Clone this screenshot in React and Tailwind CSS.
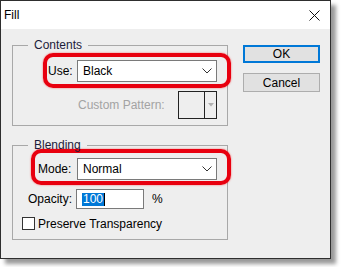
import React from 'react';

const font = { fontFamily: '"Liberation Sans", Arial, sans-serif' };

const Chevron = () => (
  <svg width="10" height="6" viewBox="0 0 10 6" className="shrink-0">
    <path d="M0.5 0.5 L5 5 L9.5 0.5" fill="none" stroke="#333" strokeWidth="1" />
  </svg>
);

const Select = ({ value }) => (
  <div className="w-[140px] h-[22px] bg-white border border-[#7a7a7a] flex items-center justify-between pl-[5px] pr-[4px] text-[12px] text-black">
    <span>{value}</span>
    <Chevron />
  </div>
);

const Group = ({ title, children, className = '' }) => (
  <fieldset className={`border border-[#a8a8a8] m-0 p-0 min-w-0 w-[216px] ${className}`}>
    <legend className="ml-[15px] px-[6px] text-[12px] leading-[16px] text-[#1c1c3a]">{title}</legend>
    {children}
  </fieldset>
);

export default function App() {
  return (
    <div className="w-[341px] h-[267px] bg-white" style={font}>
      <div className="w-[331px] h-[259px] border border-[#2e2e2e] bg-[#eeeeee] shadow-[5px_5px_4px_rgba(0,0,0,0.4)] flex flex-col">
        {/* Title bar */}
        <div className="h-[28px] bg-white flex items-center justify-between pl-[3px] pr-[10px] shrink-0">
          <span className="text-[12px] text-black">Fill</span>
          <svg width="11" height="11" viewBox="0 0 11 11">
            <path d="M0.5 0.5 L10.5 10.5 M10.5 0.5 L0.5 10.5" stroke="#111" strokeWidth="1" />
          </svg>
        </div>

        <div className="flex pl-[11px]">
          {/* Left column */}
          <div className="flex flex-col pt-[8px]">
            <Group title="Contents" className="pb-[6px]">
              <div className="ml-[30px] w-[188px] h-[35px] border-[4px] border-[#e8000f] rounded-[10px] shadow-[0_0_2px_rgba(255,0,0,0.6)] flex items-start pt-[3px] pl-[1px] pr-[10px] text-[12px] text-black">
                <span className="leading-[22px]">Use:</span>
                <div className="ml-auto">
                  <Select value="Black" />
                </div>
              </div>
              <div className="mt-[3px] h-[28px] flex items-center pl-[65px] pr-[10px] text-[12px] text-[#a3a3a3]">
                <span>Custom Pattern:</span>
                <div className="ml-auto w-[39px] h-[28px] border border-[#222] flex">
                  <div className="flex-1" />
                  <div className="w-[12px] border-l border-[#222] flex items-center justify-center">
                    <svg width="6" height="4" viewBox="0 0 6 4">
                      <path d="M0 0 L6 0 L3 3.5 Z" fill="#b0b0b0" />
                    </svg>
                  </div>
                </div>
              </div>
            </Group>

            <Group title="Blending" className="mt-[11px] pb-[9px]">
              <div className="-mt-[4px] ml-[18px] w-[200px] h-[36px] border-[4px] border-[#e8000f] rounded-[10px] shadow-[0_0_2px_rgba(255,0,0,0.6)] flex items-start pt-[5px] pl-[3px] pr-[10px] text-[12px] text-black">
                <span className="leading-[22px]">Mode:</span>
                <div className="ml-auto">
                  <Select value="Normal" />
                </div>
              </div>
              <div className="mt-[4px] h-[20px] flex items-center pl-[15px] text-[12px] text-black">
                <span className="w-[48px]">Opacity:</span>
                <div className="w-[68px] h-[20px] bg-white border border-[#7a7a7a] flex items-center pl-[5px]">
                  <span className="bg-[#0078d7] text-white leading-[13px] px-[1px]">100</span>
                  <span className="w-px h-[13px] bg-black" />
                </div>
                <span className="ml-[8px]">%</span>
              </div>
              <div className="mt-[8px] h-[13px] flex items-center pl-[9px] text-[12px] text-black">
                <div className="w-[13px] h-[13px] border border-[#333] bg-white" />
                <span className="ml-[3px]">Preserve Transparency</span>
              </div>
            </Group>
          </div>

          {/* Buttons */}
          <div className="flex flex-col ml-[15px] pt-[16px] gap-[10px]">
            <button className="w-[77px] h-[18px] border-2 border-[#0078d7] bg-[#e1e1e1] text-[12px] text-black flex items-center justify-center leading-none">
              OK
            </button>
            <button className="w-[77px] h-[19px] border border-[#adadad] bg-[#e1e1e1] text-[12px] text-black flex items-center justify-center leading-none">
              Cancel
            </button>
          </div>
        </div>
      </div>
    </div>
  );
}
